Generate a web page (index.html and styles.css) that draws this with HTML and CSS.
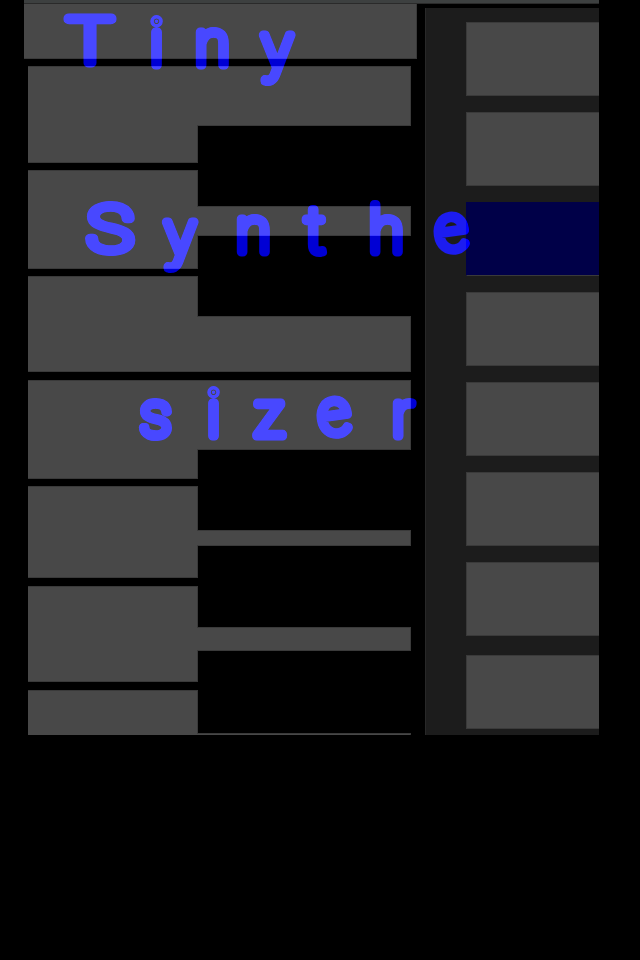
FILE: index.html
```html
<!DOCTYPE html>
<html lang="en">
<head>
<meta charset="utf-8">
<title>Tiny Synthesizer</title>
<link rel="stylesheet" href="styles.css">
</head>
<body>
<main class="stage">
  <div class="top-strip"></div>
  <div class="columns">
    <section class="keyboard">
      <div class="key-top"></div>
      <div class="key k1"><div class="body"></div><div class="arm"></div></div>
      <div class="key k2"><div class="body"></div><div class="arm"></div></div>
      <div class="key k3"><div class="body"></div><div class="arm"></div></div>
      <div class="key k4"><div class="body"></div><div class="arm"></div></div>
      <div class="key k5"><div class="body"></div><div class="arm"></div></div>
      <div class="key k6"><div class="body"></div><div class="arm"></div></div>
      <div class="key k7"><div class="body"></div><div class="arm"></div></div>
    </section>
    <aside class="panel">
      <div class="pad"></div>
      <div class="pad"></div>
      <div class="pad active"></div>
      <div class="pad"></div>
      <div class="pad"></div>
      <div class="pad"></div>
      <div class="pad"></div>
      <div class="pad last"></div>
    </aside>
  </div>
</main>
<svg class="title" width="640" height="960" viewBox="0 0 640 960" aria-label="Tiny Synthesizer">
  <text x="67" y="63" textLength="46" lengthAdjust="spacingAndGlyphs">T</text>
  <text x="150 195 262" y="65 65 68">iny</text>
  <text x="87" y="251" textLength="46" lengthAdjust="spacingAndGlyphs">S</text>
  <text x="165 236 305 369 438" y="255 252 252 252 252" rotate="0 0 0 0 -8">ynthe</text>
  <text x="140 207 254 321 392" y="436 436 436 436 436" rotate="0 0 0 -8 0">sizer</text>
</svg>
</body>
</html>
```
FILE: styles.css
```css
html, body {
  margin: 0;
  padding: 0;
  background: #000;
}

body {
  position: relative;
  width: 640px;
  height: 960px;
  overflow: hidden;
}

.stage {
  width: 575px;
  height: 735px;
  margin-left: 24px;
  overflow: hidden;
}

.top-strip {
  height: 4px;
  box-sizing: border-box;
  background: #3d4040;
  border-bottom: 1px solid #2a2a2a;
}

.columns {
  display: flex;
  align-items: flex-start;
}

.keyboard {
  flex: 0 0 401px;
  height: 731px;
}

.key-top {
  width: 393px;
  height: 55px;
  box-sizing: border-box;
  background: #484848;
  border-bottom: 1px solid #3a3a3a;
  border-right: 1px solid #3a3a3a;
}

.key {
  display: flex;
  align-items: flex-start;
  margin-left: 4px;
  margin-top: 7px;
}

.body, .arm {
  box-sizing: border-box;
  background: #484848;
  border-top: 1px solid #3a3a3a;
  border-bottom: 1px solid #3a3a3a;
}

.body {
  flex: 0 0 170px;
  border-right: 1px solid #3a3a3a;
}

.arm {
  position: relative;
  flex: 0 0 214px;
  margin-left: -1px;
  border-right: 1px solid #3a3a3a;
}

.k1 .body { height: 97px; }
.k1 .arm { height: 60px; }

.k2 .body { height: 99px; }
.k2 .arm { height: 30px; margin-top: 36px; }

.k3 .body { height: 96px; }
.k3 .arm { height: 56px; margin-top: 40px; }

.k4 { margin-top: 8px; }
.k4 .body { height: 99px; }
.k4 .arm { height: 70px; }

.k5 .body { height: 92px; }
.k5 .arm { height: 16px; margin-top: 44px; }

.k6 { margin-top: 8px; }
.k6 .body { height: 96px; }
.k6 .arm { height: 24px; margin-top: 41px; }

.k7 { margin-top: 8px; }
.k7 .body { height: 60px; }
.k7 .arm { height: 20px; margin-top: 43px; }

.panel {
  flex: 0 0 174px;
  box-sizing: border-box;
  height: 727px;
  margin-top: 4px;
  padding: 14px 0 0 40px;
  display: flex;
  flex-direction: column;
  gap: 16px;
  background: #1c1c1c;
  border-left: 1px solid #282828;
}

.pad {
  flex: 0 0 74px;
  box-sizing: border-box;
  background: #484848;
  border-left: 1px solid #3a3a3a;
  border-top: 1px solid #3a3a3a;
  border-bottom: 1px solid #3a3a3a;
}

.pad.active {
  background: #000048;
  border-left-color: #000048;
  border-top-color: #000048;
}

.pad.last {
  margin-top: 3px;
}

.title {
  position: absolute;
  left: 0;
  top: 0;
  mix-blend-mode: plus-lighter;
  pointer-events: none;
}

.title text {
  font-family: Roboto, sans-serif;
  font-weight: 100;
  font-size: 63px;
  fill: rgb(0, 0, 212);
  stroke: rgb(0, 0, 212);
  stroke-width: 9px;
  stroke-linecap: round;
  stroke-linejoin: round;
}
```
